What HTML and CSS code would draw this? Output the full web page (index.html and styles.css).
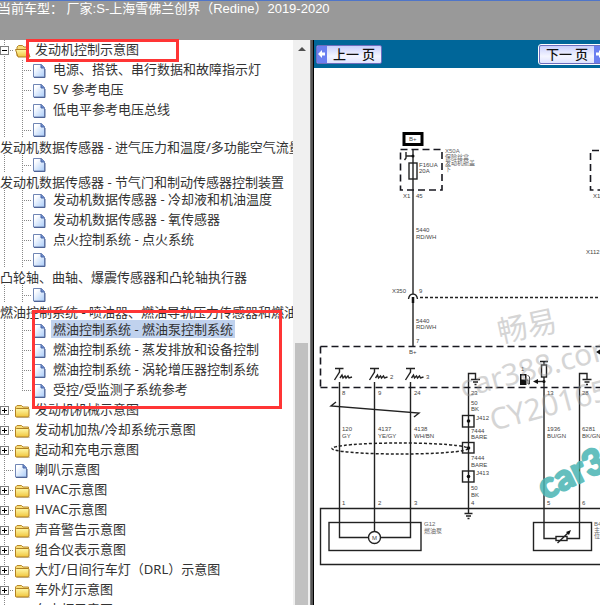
FILE: index.html
```html
<!DOCTYPE html>
<html lang="zh-CN">
<head>
<meta charset="utf-8">
<title>发动机控制示意图</title>
<link rel="stylesheet" href="styles.css">
</head>
<body>
<svg class="sprite" aria-hidden="true">
  <defs>
    <linearGradient id="gold" x1="0" y1="0" x2="0" y2="1"><stop offset="0" stop-color="#fff9a8"/><stop offset="1" stop-color="#f0c43c"/></linearGradient>
    <linearGradient id="paper" x1="0" y1="0" x2="1" y2="1"><stop offset="0.2" stop-color="#fff"/><stop offset="1" stop-color="#a9cbf8"/></linearGradient>
    <symbol id="folder" viewBox="0 0 18 16">
      <path d="M1.5 15.8H15" stroke="#bbb"/>
      <path d="M.5 14.5V5L2 3.5h4.500L8 5h5.500v2" fill="#f7dc78" stroke="#b8892c"/>
      <rect x=".5" y="6.500" width="13.500" height="8.500" rx="1" fill="url(#gold)" stroke="#b07f22"/>
    </symbol>
    <symbol id="folder-open" viewBox="0 0 18 16">
      <path d="M2 14V5l1.500-1.500h4L9 5h4.500v4" fill="#f7dc78" stroke="#b8892c"/>
      <path d="M.5 7.500h12l2.500 7.500H3z" fill="url(#gold)" stroke="#b07f22" stroke-linejoin="round"/>
    </symbol>
    <symbol id="doc" viewBox="0 0 18 16">
      <path d="M.5 2.500h8l3 3v9.500H.5z" fill="url(#paper)" stroke="#7086b5"/>
      <path d="M8 2.500v3.500h3.500" fill="#6485c8" stroke="#4c68a8"/>
      <path d="M1 15.500h11V7" fill="none" stroke="#4f6496"/>
    </symbol>
  </defs>
</svg>
<header class="topbar">当前车型： 厂家:S-上海雪佛兰创界（Redine）2019-2020</header>
<main class="frames">
  <nav class="sidebar" aria-label="示意图目录">
    <ul class="tree">
      <li class="row"><span class="joint"><button class="toggle open" aria-label="折叠"></button></span><svg class="icon"><use href="#folder-open"/></svg><a href="#">发动机控制示意图</a></li>
      <li class="row"><span class="guide"></span><span class="joint leaf"></span><svg class="icon"><use href="#doc"/></svg><a href="#">电源、搭铁、串行数据和故障指示灯</a></li>
      <li class="row"><span class="guide"></span><span class="joint leaf"></span><svg class="icon"><use href="#doc"/></svg><a href="#">5V 参考电压</a></li>
      <li class="row"><span class="guide"></span><span class="joint leaf"></span><svg class="icon"><use href="#doc"/></svg><a href="#">低电平参考电压总线</a></li>
      <li class="row wrapped"><span class="guide"></span><span class="joint leaf"></span><svg class="icon"><use href="#doc"/></svg><a href="#">发动机数据传感器 - 进气压力和温度/多功能空气流量</a></li>
      <li class="row wrapped"><span class="guide"></span><span class="joint leaf"></span><svg class="icon"><use href="#doc"/></svg><a href="#">发动机数据传感器 - 节气门和制动传感器控制装置</a></li>
      <li class="row"><span class="guide"></span><span class="joint leaf"></span><svg class="icon"><use href="#doc"/></svg><a href="#">发动机数据传感器 - 冷却液和机油温度</a></li>
      <li class="row"><span class="guide"></span><span class="joint leaf"></span><svg class="icon"><use href="#doc"/></svg><a href="#">发动机数据传感器 - 氧传感器</a></li>
      <li class="row"><span class="guide"></span><span class="joint leaf"></span><svg class="icon"><use href="#doc"/></svg><a href="#">点火控制系统 - 点火系统</a></li>
      <li class="row wrapped"><span class="guide"></span><span class="joint leaf"></span><svg class="icon"><use href="#doc"/></svg><a href="#">凸轮轴、曲轴、爆震传感器和凸轮轴执行器</a></li>
      <li class="row wrapped"><span class="guide"></span><span class="joint leaf"></span><svg class="icon"><use href="#doc"/></svg><a href="#">燃油控制系统 - 喷油器、燃油导轨压力传感器和燃油</a></li>
      <li class="row"><span class="guide"></span><span class="joint leaf"></span><svg class="icon"><use href="#doc"/></svg><a class="selected" href="#">燃油控制系统 - 燃油泵控制系统</a></li>
      <li class="row"><span class="guide"></span><span class="joint leaf"></span><svg class="icon"><use href="#doc"/></svg><a href="#">燃油控制系统 - 蒸发排放和设备控制</a></li>
      <li class="row"><span class="guide"></span><span class="joint leaf"></span><svg class="icon"><use href="#doc"/></svg><a href="#">燃油控制系统 - 涡轮增压器控制系统</a></li>
      <li class="row"><span class="guide last"></span><span class="joint leaf last"></span><svg class="icon"><use href="#doc"/></svg><a href="#">受控/受监测子系统参考</a></li>
      <li class="row"><span class="joint"><button class="toggle" aria-label="展开"></button></span><svg class="icon"><use href="#folder"/></svg><a href="#">发动机机械示意图</a></li>
      <li class="row"><span class="joint"><button class="toggle" aria-label="展开"></button></span><svg class="icon"><use href="#folder"/></svg><a href="#">发动机加热/冷却系统示意图</a></li>
      <li class="row"><span class="joint"><button class="toggle" aria-label="展开"></button></span><svg class="icon"><use href="#folder"/></svg><a href="#">起动和充电示意图</a></li>
      <li class="row"><span class="joint leaf"></span><svg class="icon"><use href="#doc"/></svg><a href="#">喇叭示意图</a></li>
      <li class="row"><span class="joint"><button class="toggle" aria-label="展开"></button></span><svg class="icon"><use href="#folder"/></svg><a href="#">HVAC示意图</a></li>
      <li class="row"><span class="joint"><button class="toggle" aria-label="展开"></button></span><svg class="icon"><use href="#folder"/></svg><a href="#">HVAC示意图</a></li>
      <li class="row"><span class="joint"><button class="toggle" aria-label="展开"></button></span><svg class="icon"><use href="#folder"/></svg><a href="#">声音警告示意图</a></li>
      <li class="row"><span class="joint"><button class="toggle" aria-label="展开"></button></span><svg class="icon"><use href="#folder"/></svg><a href="#">组合仪表示意图</a></li>
      <li class="row"><span class="joint"><button class="toggle" aria-label="展开"></button></span><svg class="icon"><use href="#folder"/></svg><a href="#">大灯/日间行车灯（DRL）示意图</a></li>
      <li class="row"><span class="joint"><button class="toggle" aria-label="展开"></button></span><svg class="icon"><use href="#folder"/></svg><a href="#">车外灯示意图</a></li>
      <li class="row"><span class="joint"><button class="toggle" aria-label="展开"></button></span><svg class="icon"><use href="#folder"/></svg><a href="#">车内灯示意图</a></li>
    </ul>
    <div class="scrollbar"><span class="arrow"></span><span class="thumb"></span></div>
  </nav>
  <div class="divider"></div>
  <section class="viewer">
    <div class="pager">
      <button class="page prev"><span class="cap"><svg viewBox="0 0 10 16"><path d="M1 8l4-4v2.500h3v3H5V12z" fill="#fff"/></svg></span><span class="label">上一 页</span></button>
      <button class="page next"><span class="label">下一 页</span><span class="cap"><svg viewBox="0 0 10 16"><path d="M9 8L5 4v2.500H2v3h3V12z" fill="#fff"/></svg></span></button>
    </div>
    <svg class="diagram" role="img" aria-label="燃油泵控制系统示意图">
      <g transform="translate(-314 -68)">
        <g class="wire">
          <path d="M413 149V294M413 303V346M339.500 382V537.500H368M374.500 382V531M410.500 382V537.500H381"/>
          <path d="M468.500 415V373.500H475.500V379M468.500 427V442M468.500 453V471M468.500 482V514M579.500 535V373.500H587V379M544 377V538.500H556M567 538.500H579.500V535"/>
          <path d="M471 379.500H480M473 382H478M474.500 384.500H476.500M582.500 379.500H591.500M584.500 382H589.500M586 384.500H588M464.500 513.500H472.500M466 516H471M467.500 518.500H469.500"/>
          <rect x="409" y="163" width="8" height="16"/>
          <path d="M413 156H406.500M406 152V158L404.500 160"/>
          <path d="M408.500 299C409.500 292.500 416.500 292.500 417.500 299"/>
          <path d="M335 368.500H343.500M339.500 368.500V372L334.500 380M370 368.500H379M374.500 368.500V372L369.500 380M406 368.500H415M410.500 368.500V372L405.500 380"/>
          <path d="M340 378l2-3 1 3 2-2 1 2 2-2 1 2 3-1M375.500 378l2-3 1 3 2-2 1 2 2-2 1 2 3-1M411.500 378l2-3 1 3 2-2 1 2 2-2 1 2 3-1"/>
          <path d="M336 402L331 406L419 413L414 417"/>
          <rect x="462.500" y="415.500" width="11.500" height="11.500"/><rect x="462.500" y="442.500" width="11.500" height="10.500"/><rect x="462.500" y="471" width="11.500" height="11"/>
          <path d="M468.500 415V427M468.500 442V453M468.500 471V482"/>
          <path d="M540 361.500H548M544 361.500V365"/><rect x="541.500" y="365" width="5" height="12"/>
          <path d="M544 381.500H536"/>
          <path d="M610 508.500H320.500V564.500H610"/><rect x="329" y="522.500" width="92" height="28"/><rect x="533.500" y="522.500" width="58" height="28"/>
          <circle cx="374.500" cy="537.500" r="6"/>
          <rect x="556" y="536.500" width="11" height="4"/><path d="M557.500 543L569 532"/>
        </g>
        <rect x="404" y="133.500" width="18" height="11" class="supply"/>
        <g class="dashed">
          <rect x="400.500" y="149.500" width="41.500" height="40.500"/>
          <path d="M610 150.500H590.500V190H610"/>
          <path d="M320.500 346.500H610M320.500 387.500H610M320.500 346.500V387.500"/>
        </g>
        <path class="dotted" d="M420 297.500H610"/>
        <ellipse class="dotted" cx="400" cy="448.500" rx="68" ry="5.500"/>
        <path d="M413 297V303" stroke="#111" stroke-width="2.500"/>
        <g fill="#111">
          <circle cx="413" cy="156" r="1.500"/><circle cx="468.500" cy="421" r="1.800"/><circle cx="468.500" cy="448" r="1.800"/><circle cx="468.500" cy="476.500" r="1.800"/><circle cx="544" cy="381.500" r="1.500"/>
          <path d="M533 381.500l5-2.500v5zM571 530l-2 5-3-3zM596 352l5-3v6z"/>
          <path d="M520 374h6.500v11h-6.500zM521.500 375.500v4h3.500v-4z" fill-rule="evenodd"/>
          <path d="M526.500 380h1.500v4h1.500v-7l-2-2" fill="none" stroke="#111" stroke-width=".8"/>
        </g>
        <g class="tag">
          <text x="409" y="141">B+</text><text x="419" y="167">F16UA</text><text x="419" y="173">20A</text>
          <text x="403" y="198">X1</text><text x="416" y="198">45</text><text x="416" y="232">5440</text><text x="416" y="239">RD/WH</text>
          <text x="392" y="293">X350</text><text x="419" y="293">9</text><text x="416" y="323">5440</text><text x="416" y="329">RD/WH</text><text x="416" y="343">7</text><text x="409" y="354">B+</text>
          <text x="390" y="379">2</text><text x="426" y="379">3</text><text x="521" y="371">1</text>
          <text x="342" y="395">8</text><text x="378" y="395">9</text><text x="414" y="395">24</text><text x="471" y="395">23</text><text x="547" y="395">13</text><text x="582" y="395">28</text>
          <text x="342" y="431">120</text><text x="342" y="438">GY</text><text x="378" y="431">4137</text><text x="378" y="438">YE/GY</text><text x="414" y="431">4138</text><text x="414" y="438">WH/BN</text>
          <text x="471" y="405">50</text><text x="471" y="411">BK</text><text x="476" y="420">J412</text><text x="471" y="433">7444</text><text x="471" y="439">BARE</text><text x="471" y="460">7444</text><text x="471" y="467">BARE</text><text x="476" y="475">J413</text><text x="471" y="490">50</text><text x="471" y="497">BK</text>
          <text x="547" y="431">1936</text><text x="547" y="438">BU/GN</text><text x="582" y="431">6281</text><text x="582" y="438">BK/GN</text>
          <text x="342" y="505">1</text><text x="378" y="505">2</text><text x="414" y="505">3</text><text x="471" y="505">4</text><text x="547" y="505">5</text><text x="582" y="505">6</text>
          <text x="372" y="540">M</text><text x="593" y="198">X1</text><text x="586" y="254">X112</text>
        </g>
        <g class="note">
          <text x="445" y="153">X50A</text><text x="445" y="159">保险丝盒</text><text x="445" y="165">发动机舱盖</text><text x="445" y="171">下</text>
          <text x="424" y="526">G12</text><text x="424" y="533">燃油泵</text><text x="594" y="526">B46</text><text x="594" y="532">主油</text><text x="594" y="538">位置</text>
        </g>
        <g class="watermark">
          <text transform="translate(500 343) rotate(-12)">畅易</text>
          <text transform="translate(463 398) rotate(-15)">car388.com</text>
          <text transform="translate(493 431) rotate(-15)">CY20165</text>
        </g>
        <text class="brand" transform="translate(545 500) rotate(-26)">car388</text>
      </g>
    </svg>
  </section>
  <div class="mark mark-title"></div>
  <div class="mark mark-group"></div>
</main>
</body>
</html>
```
FILE: styles.css
```css
* { box-sizing: border-box; }

html, body { height: 100%; }

body {
  margin: 0;
  display: flex;
  flex-direction: column;
  overflow: hidden;
  background: #fff;
  font-family: "Noto Sans", "Noto Sans CJK SC", sans-serif;
  font-size: 13px;
  color: #333;
}

.sprite { position: absolute; width: 0; height: 0; }

.topbar {
  flex: none;
  height: 40px;
  border-top: 1px solid #4f75c8;
  background: #999;
  color: #fff;
  font-family: "Liberation Sans", "Noto Sans CJK SC", sans-serif;
  line-height: 16px;
  white-space: nowrap;
  text-indent: -2px;
}

.frames {
  position: relative;
  flex: 1;
  min-height: 0;
  display: grid;
  grid-template-columns: 310px 4px minmax(0, 1fr);
  grid-template-rows: minmax(0, 1fr);
}

.sidebar { display: flex; min-width: 0; }

.tree {
  flex: 1;
  min-width: 0;
  margin: 0;
  padding: 0;
  list-style: none;
  overflow: hidden;
}

.row {
  display: flex;
  align-items: center;
  height: 20px;
  white-space: nowrap;
}

.row a {
  flex: none;
  align-self: flex-start;
  padding: 0 2px;
  color: inherit;
  line-height: 18px;
  text-decoration: none;
}

.row .selected { background: #c0d2ee; }

.row.wrapped {
  flex-wrap: wrap;
  align-content: flex-start;
  height: 35px;
}

.wrapped .guide, .wrapped .joint { height: 18px; }

.wrapped a { flex: 0 0 100%; padding: 0; }

.guide, .joint {
  flex: none;
  height: 20px;
  background: repeating-linear-gradient(to bottom, #888 0 1px, transparent 1px 2px) 4px 0 / 1px 100% no-repeat;
}

.guide { width: 18px; }

.joint {
  display: flex;
  align-items: center;
  width: 15px;
  background:
    repeating-linear-gradient(to bottom, #888 0 1px, transparent 1px 2px) 4px 0 / 1px 100% no-repeat,
    repeating-linear-gradient(to right, #888 0 1px, transparent 1px 2px) 4px 10px / 10px 1px no-repeat;
}

.joint.last {
  background-size: 1px 11px, 10px 1px;
}

.toggle {
  width: 9px;
  height: 9px;
  padding: 0;
  border: 1px solid #808080;
  border-radius: 0;
  background:
    linear-gradient(#000, #000) center / 5px 1px no-repeat,
    linear-gradient(#000, #000) center / 1px 5px no-repeat,
    #fff;
}

.toggle.open { background: linear-gradient(#000, #000) center / 5px 1px no-repeat, #fff; }

.icon { flex: none; width: 18px; height: 16px; }

.scrollbar {
  flex: none;
  display: flex;
  flex-direction: column;
  justify-content: space-between;
  align-items: center;
  width: 17px;
  padding-top: 7px;
  background: #f0f0f0;
}

.arrow {
  border: 4px solid transparent;
  border-top: 0;
  border-bottom-color: #505050;
}

.thumb { width: 13px; height: 47%; background: #c1c1c1; }

.divider { background: linear-gradient(to right, #777 0 1px, #555 1px 3px, #000 3px); }

.viewer {
  display: flex;
  flex-direction: column;
  min-width: 0;
  overflow: hidden;
}

.pager {
  flex: none;
  display: flex;
  justify-content: space-between;
  align-items: center;
  height: 28px;
  padding: 0 0 0 2px;
  background: #069;
}

.page {
  display: flex;
  width: 66px;
  height: 19px;
  padding: 0;
  border: 1px solid #6d6dbd;
  border-radius: 2px;
  overflow: hidden;
  background: linear-gradient(#c9cffc, #f4f5ff 60%, #dfe3ff);
  color: #111;
  font: 500 13px/16px "Noto Sans CJK SC", sans-serif;
}

.next { margin-right: -5px; outline: 1px solid #fff; }

.cap { flex: none; display: flex; width: 10px; background: #6b7ff0; }

.cap svg { width: 10px; height: 16px; }

.label { flex: 1; white-space: nowrap; }

.diagram { flex: 1; width: 100%; min-height: 0; }

.wire { fill: none; stroke: #222; stroke-width: 1.4; }

.supply { fill: #fff; stroke: #000; stroke-width: 3; }

.dashed { fill: none; stroke: #181820; stroke-width: 1.6; stroke-dasharray: 7 4; }

.dotted { fill: none; stroke: #222; stroke-width: 1.5; stroke-dasharray: 3 2; }

.tag { fill: #444; font: 6px "Liberation Sans", sans-serif; }

.note { fill: #666; font: 6px "Liberation Sans", "Noto Sans CJK SC", sans-serif; }

.watermark { fill: #999; opacity: 0.4; font: 30px "Noto Sans", "Noto Sans CJK SC", sans-serif; }

.brand {
  fill: #4ab5b3;
  stroke: #4ab5b3;
  stroke-width: 2;
  stroke-linejoin: round;
  opacity: 0.85;
  font: 900 36px Lato, sans-serif;
}

.mark { position: absolute; border: 3px solid #ff3535; pointer-events: none; }

.mark-title { left: 26px; top: -1px; width: 153px; height: 23px; }

.mark-group { left: 32px; top: 270px; width: 250px; height: 99px; }
```
